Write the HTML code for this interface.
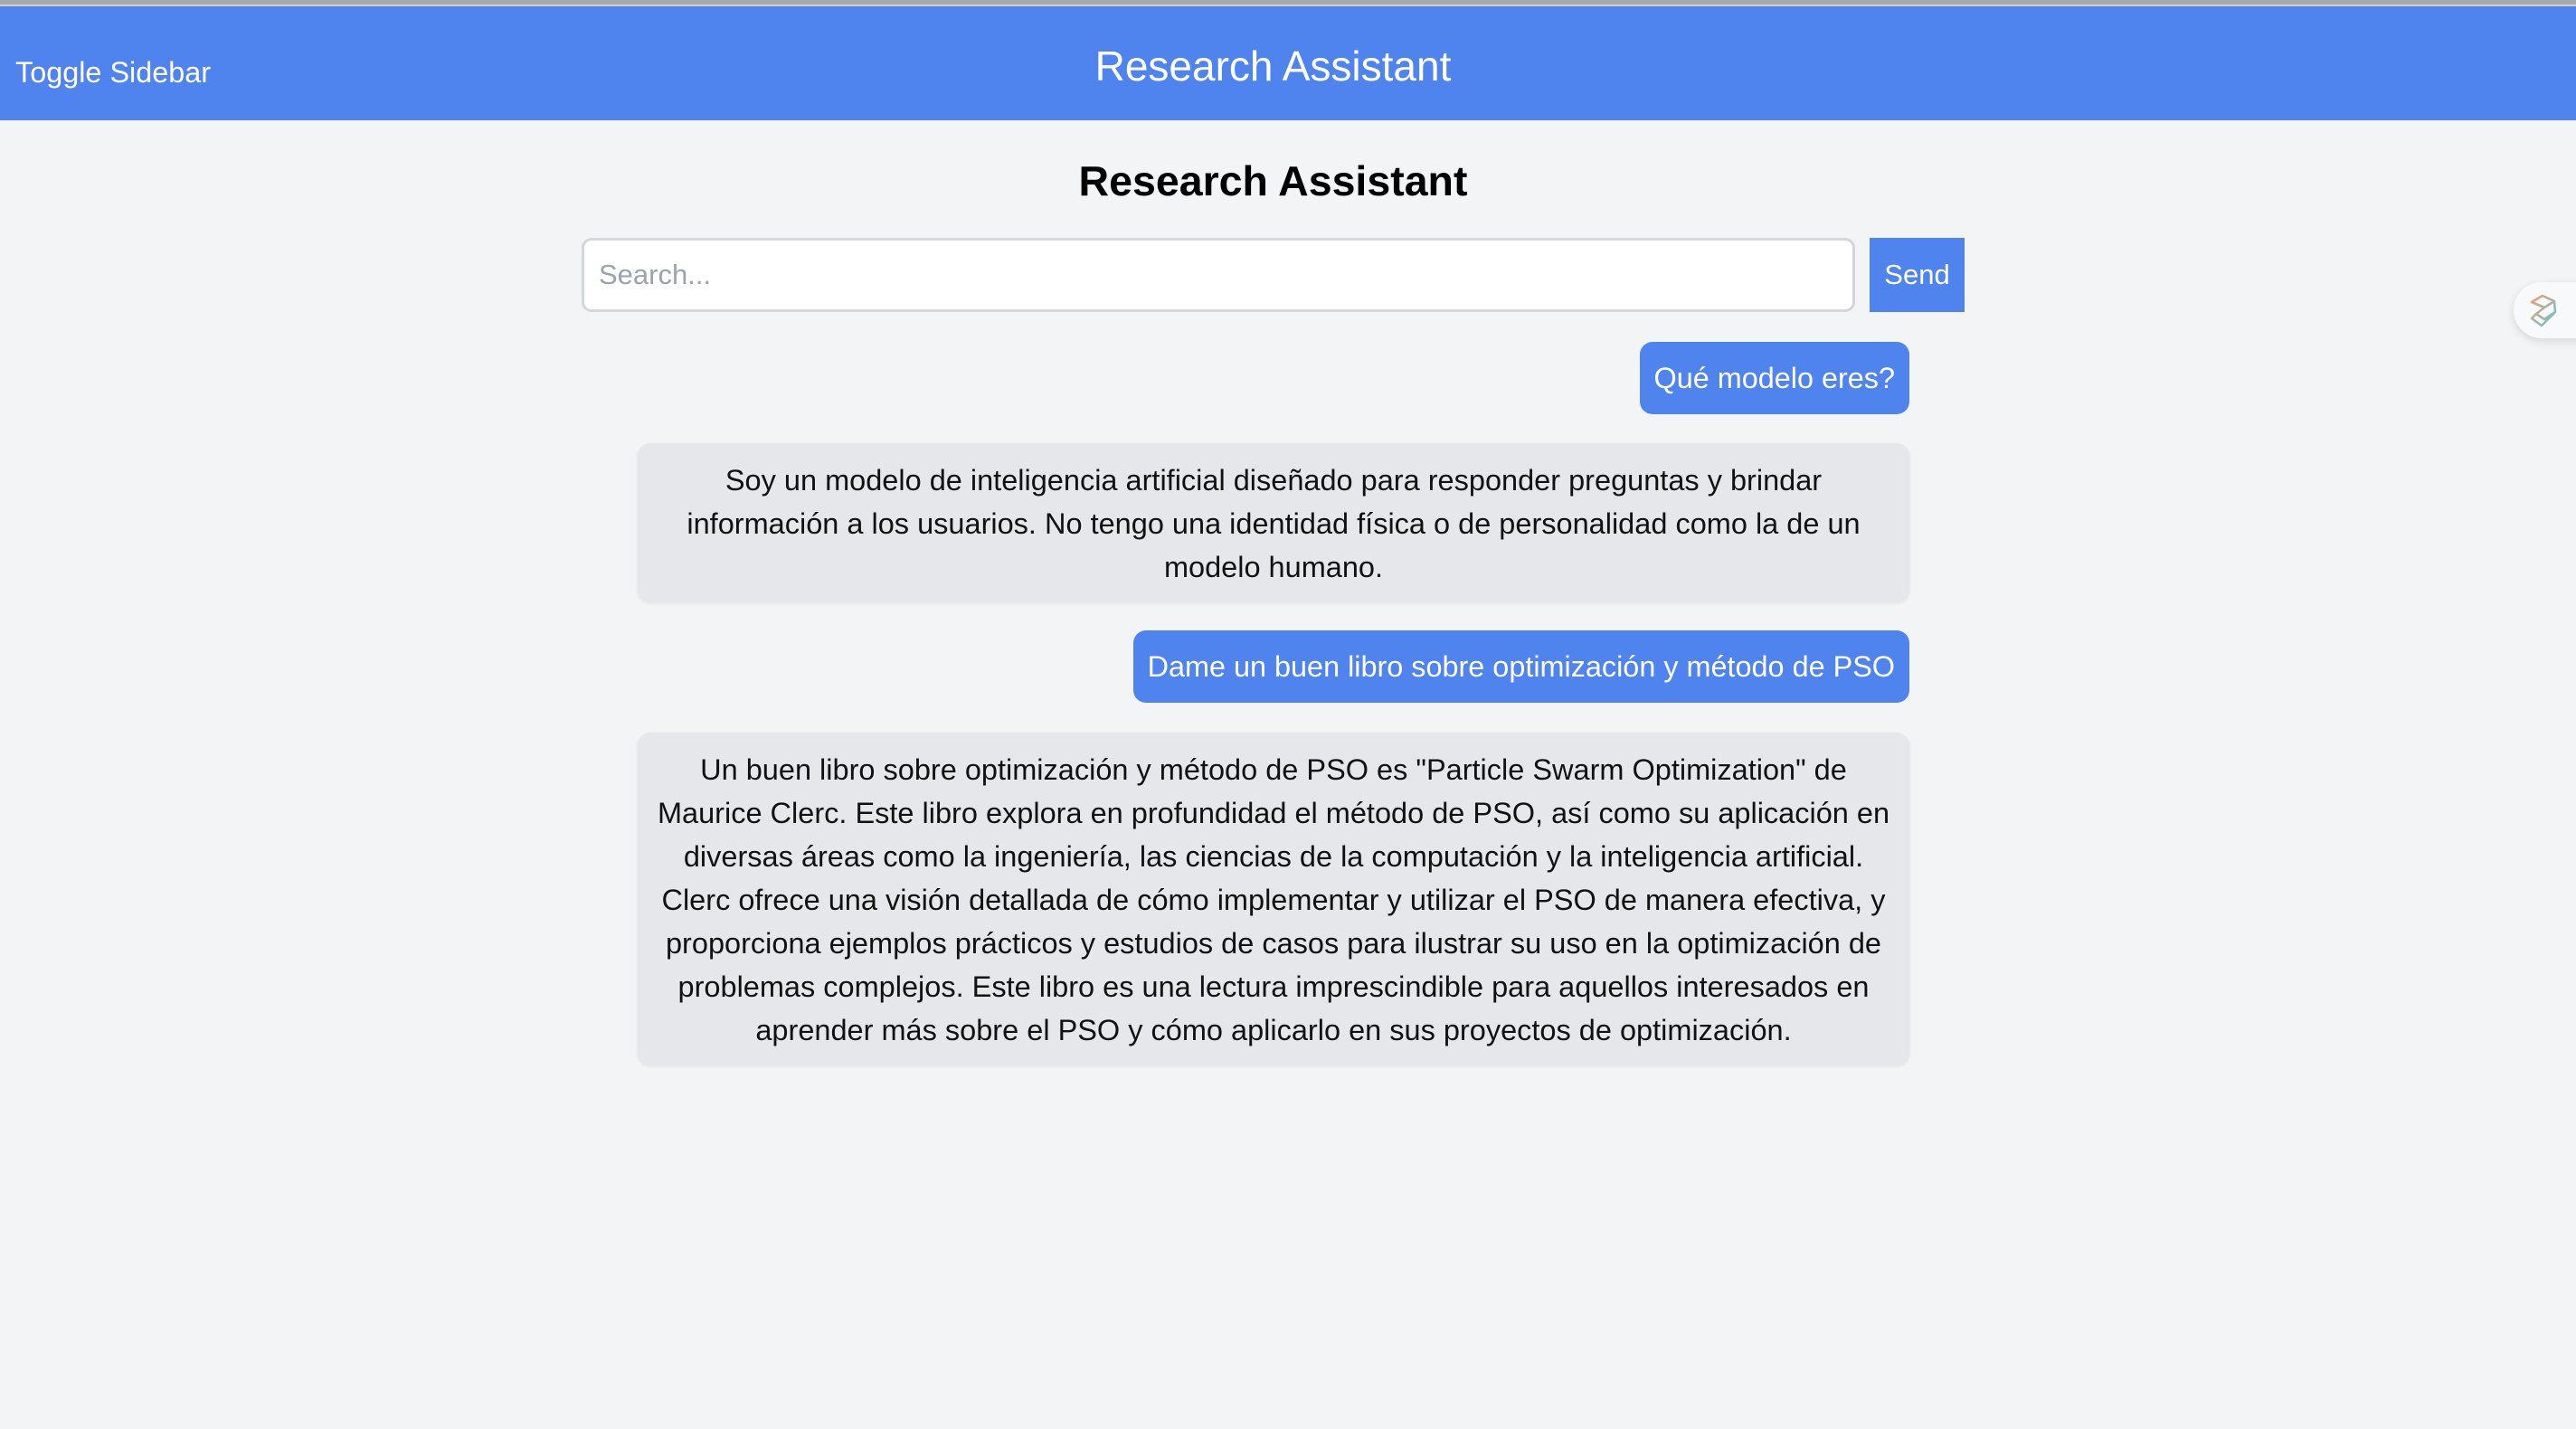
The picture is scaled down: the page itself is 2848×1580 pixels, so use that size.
<!DOCTYPE html>
<html><head><meta charset="utf-8"><style>
*{margin:0;padding:0;box-sizing:border-box}
html,body{width:2848px;height:1580px;overflow:hidden;background:#f3f4f6;font-family:"Liberation Sans",sans-serif}
.topbar{position:absolute;left:0;top:0;width:2848px;height:5px;background:#a9a9a9}
.topline{position:absolute;left:0;top:5px;width:2848px;height:2px;background:#d0d0d0}
.header{position:absolute;left:0;top:7px;width:2848px;height:126px;background:#4f83ee;color:#fff}
.toggle{position:absolute;left:17px;top:55px;font-size:32.4px;line-height:36px}
.htitle{position:absolute;left:0;width:2815px;top:40px;text-align:center;font-size:46px;line-height:52px}
h1{position:absolute;left:0;width:2815px;top:172px;text-align:center;font-size:46.5px;line-height:56px;font-weight:bold;color:#000}
.input{position:absolute;left:643px;top:263px;width:1408px;height:82px;background:#fff;border:3px solid #d4d6da;border-radius:11px;font-size:31px;color:#9ca3af;padding-left:16px;line-height:76px}
.send{position:absolute;left:2067px;top:263px;width:105px;height:82px;background:#4f83ee;color:#fff;font-size:31px;line-height:82px;text-align:center}
.user{position:absolute;right:737px;background:#4f83ee;color:#fff;font-size:32.4px;border-radius:14px;height:80px;line-height:80px;padding:0 16px;white-space:nowrap}
.bot{position:absolute;left:705px;width:1406px;background:#e5e7eb;border-radius:14px;box-shadow:0 2px 4px rgba(0,0,0,.08);text-align:center;font-size:32.5px;line-height:48px;color:#111;white-space:nowrap;padding-top:17px}
.widget{position:absolute;left:2779px;top:312px;width:80px;height:62px;background:#f8f9fa;border-radius:31px 0 0 31px;box-shadow:0 3px 10px rgba(0,0,0,.12)}
</style></head><body>
<div class="topbar"></div><div class="topline"></div>
<div class="header"><div class="toggle">Toggle Sidebar</div><div class="htitle">Research Assistant</div></div>
<h1>Research Assistant</h1>
<div class="input">Search...</div>
<div class="send">Send</div>
<div class="user" style="top:378px">Qué modelo eres?</div>
<div class="bot" style="top:490px;height:175px">Soy un modelo de inteligencia artificial diseñado para responder preguntas y brindar<br>información a los usuarios. No tengo una identidad física o de personalidad como la de un<br>modelo humano.</div>
<div class="user" style="top:697px">Dame un buen libro sobre optimización y método de PSO</div>
<div class="bot" style="top:810px;height:367px">Un buen libro sobre optimización y método de PSO es "Particle Swarm Optimization" de<br>Maurice Clerc. Este libro explora en profundidad el método de PSO, así como su aplicación en<br>diversas áreas como la ingeniería, las ciencias de la computación y la inteligencia artificial.<br>Clerc ofrece una visión detallada de cómo implementar y utilizar el PSO de manera efectiva, y<br>proporciona ejemplos prácticos y estudios de casos para ilustrar su uso en la optimización de<br>problemas complejos. Este libro es una lectura imprescindible para aquellos interesados en<br>aprender más sobre el PSO y cómo aplicarlo en sus proyectos de optimización.</div>
<div class="widget"><svg width="40" height="40" viewBox="0 0 40 40" style="position:absolute;left:12px;top:11px"><defs><linearGradient id="g" x1="0" y1="0" x2="1" y2="1"><stop offset="0" stop-color="#f0a070"/><stop offset="1" stop-color="#6cc4d0"/></linearGradient></defs><path d="M8 11 L20 4 L33 10 L22 17 Z M8 11 L22 17 L13 24 L22 30 L34 22 L33 10 M13 24 L8 29 L19 37 L34 22" fill="none" stroke="url(#g)" stroke-width="2.6" stroke-linejoin="round"/></svg></div>
</body></html>
